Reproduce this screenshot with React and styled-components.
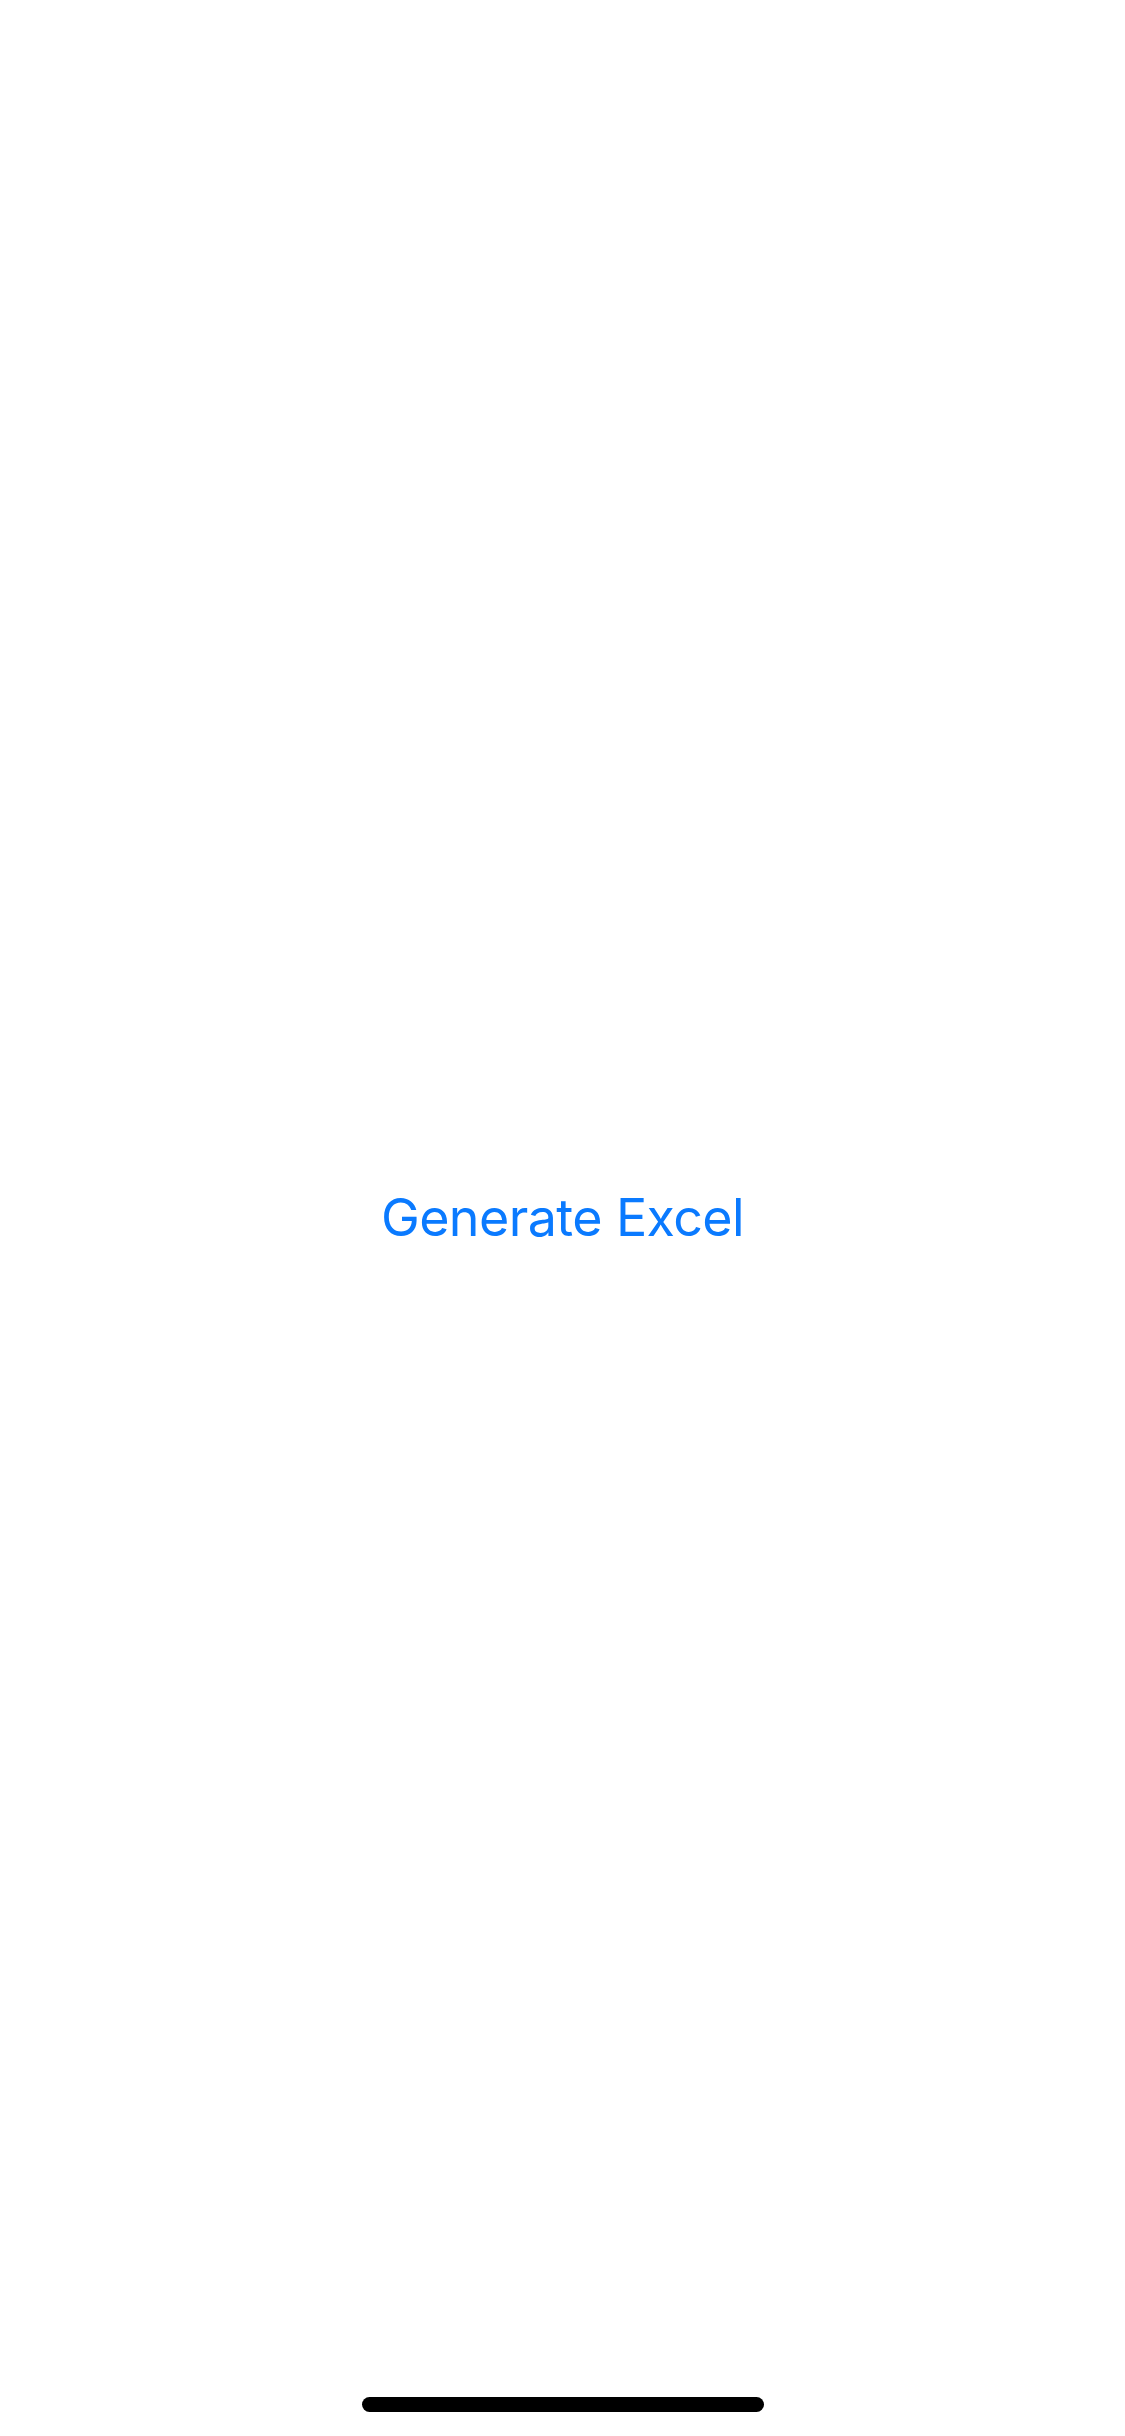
import styled, { createGlobalStyle } from "styled-components";

const GlobalStyle = createGlobalStyle`
  html, body {
    margin: 0;
    padding: 0;
    background: #ffffff;
  }
  body {
    font-family: Inter, "Noto Sans", "Liberation Sans", sans-serif;
  }
`;

function App() {
  return (
    <>
      <GlobalStyle />
      <Screen>
        <GenerateButton type="button">Generate Excel</GenerateButton>
        <HomeIndicator />
      </Screen>
    </>
  );
}

const Screen = styled.div`
  position: relative;
  width: 1125px;
  height: 2436px;
  background: #ffffff;
  display: flex;
  justify-content: center;
  align-items: center;
  overflow: hidden;
`;

const GenerateButton = styled.button`
  border: none;
  background: transparent;
  padding: 0;
  font-family: Inter, "Noto Sans", "Liberation Sans", sans-serif;
  font-size: 52px;
  font-weight: 400;
  letter-spacing: -0.6px;
  line-height: 64px;
  color: #0a7aff;
  cursor: pointer;
`;

const HomeIndicator = styled.div`
  position: absolute;
  left: 50%;
  bottom: 24px;
  transform: translateX(-50%);
  width: 402px;
  height: 15px;
  border-radius: 8px;
  background: #000000;
`;

export default App;
